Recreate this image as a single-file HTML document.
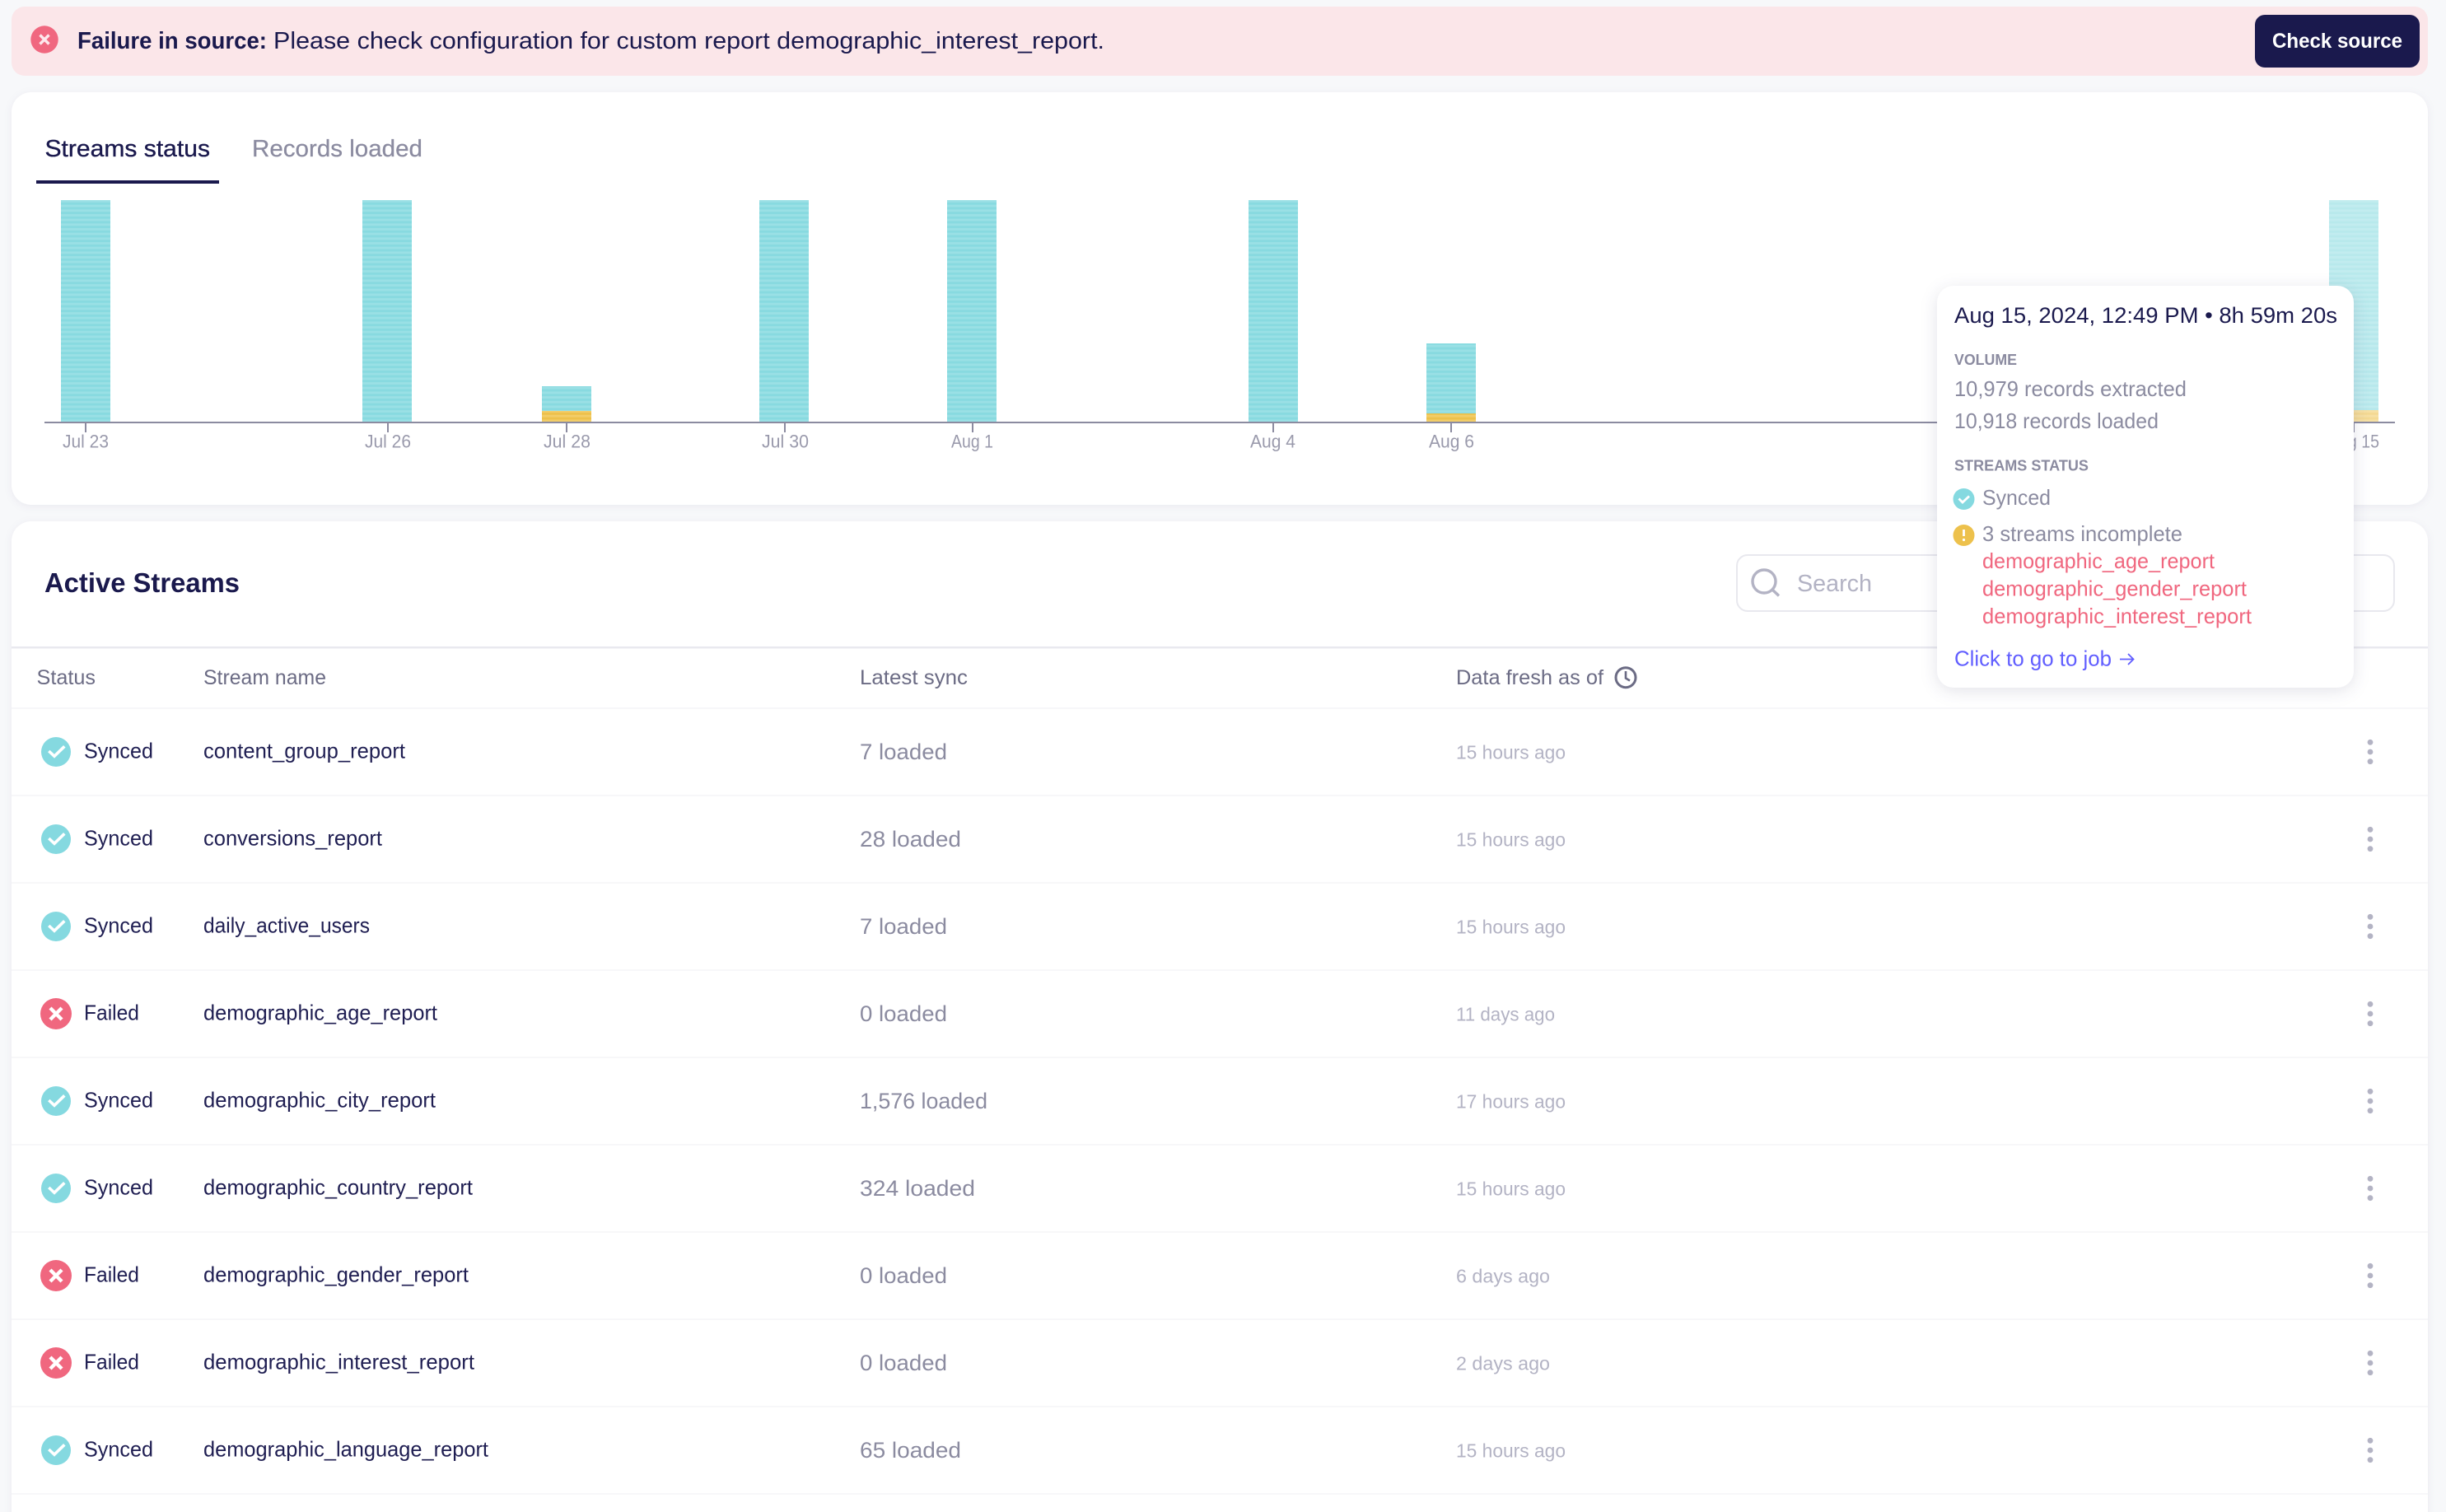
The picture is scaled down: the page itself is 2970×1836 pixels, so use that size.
<!DOCTYPE html>
<html lang="en">
<head>
<meta charset="utf-8">
<title>Streams status</title>
<style>
html,body{margin:0;padding:0;background:#f7f8fa;width:2970px;height:1836px;overflow:hidden}
svg{display:block}
text{font-family:"Liberation Sans",sans-serif;white-space:pre}
.navy{fill:#1a194d}
.n{fill:#1f1e52;font-size:26px}
.h{fill:#6b6b84;font-size:25px}
.l{fill:#8b8ba0;font-size:27px}
.a{fill:#b3b3c4;font-size:23.5px}
.x{fill:#9a9aac;font-size:22px}
.tg{fill:#8b8ba0;font-size:26px}
.ts{fill:#8b8ba0;font-size:18px;font-weight:bold}
.tr{fill:#f0677f;font-size:26px}
.card{fill:#fff;filter:drop-shadow(0 2px 5px rgba(26,25,77,.06))}
.line{stroke:#f7f7f9;stroke-width:2}
</style>
</head>
<body>
<svg width="2970" height="1836" viewBox="0 0 2970 1836" xmlns="http://www.w3.org/2000/svg">
<defs>
<pattern id="teal" patternUnits="userSpaceOnUse" width="60" height="5.67" y="243">
<rect width="60" height="5.67" fill="#88dae0"/><rect width="60" height="2.8" fill="#9ae0e5"/>
</pattern>
<pattern id="yel" patternUnits="userSpaceOnUse" width="60" height="5.67" y="243">
<rect width="60" height="5.67" fill="#edc14c"/><rect width="60" height="2.8" fill="#f2cd69"/>
</pattern>
<g id="ok"><circle r="18" fill="#85d9e0"/><path d="M-8.7-1L-2 5.3 10.3-6.7" fill="none" stroke="#fff" stroke-width="3.6"/></g>
<g id="bad"><circle r="19" fill="#f0677f"/><path d="M-7-7L7 7M7-7L-7 7" fill="none" stroke="#fff" stroke-width="4.4"/></g>
<g id="dots" fill="#b3b3c4"><circle cy="-11.7" r="3.4"/><circle r="3.4"/><circle cy="11.7" r="3.4"/></g>
</defs>

<rect width="2970" height="1836" fill="#f7f8fa"/>

<!-- Banner -->
<rect x="14" y="8" width="2934" height="84" rx="16" fill="#fbe6e9"/>
<circle cx="54" cy="48" r="16.7" fill="#f0677f"/>
<path d="M48.5 42.5l11 11m0-11l-11 11" stroke="#fde8ec" stroke-width="3.4" fill="none"/>
<text x="94" y="59" class="navy" font-size="29" font-weight="bold" textLength="230" lengthAdjust="spacingAndGlyphs">Failure in source:</text>
<text x="332" y="59" class="navy" font-size="29" textLength="1009" lengthAdjust="spacingAndGlyphs">Please check configuration for custom report demographic_interest_report.</text>
<rect x="2738" y="18" width="200" height="64" rx="12" fill="#1a194d"/>
<text x="2759" y="58" fill="#fff" font-size="25" font-weight="bold" textLength="158" lengthAdjust="spacingAndGlyphs">Check source</text>

<!-- Chart card -->
<rect class="card" x="14" y="112" width="2934" height="501" rx="24"/>
<text x="54.5" y="190" class="navy" font-size="29" stroke="#1a194d" stroke-width=".35" textLength="200.5" lengthAdjust="spacingAndGlyphs">Streams status</text>
<text x="306" y="190" fill="#8b8ba0" font-size="29" stroke="#8b8ba0" stroke-width=".25" textLength="207" lengthAdjust="spacingAndGlyphs">Records loaded</text>
<rect x="44" y="219" width="222" height="4" fill="#1a194d"/>

<g>
<rect x="74" y="243" width="60" height="269" fill="url(#teal)"/>
<rect x="440" y="243" width="60" height="269" fill="url(#teal)"/>
<rect x="658" y="469" width="60" height="30" fill="url(#teal)"/>
<rect x="658" y="499" width="60" height="13" fill="url(#yel)"/>
<rect x="922" y="243" width="60" height="269" fill="url(#teal)"/>
<rect x="1150" y="243" width="60" height="269" fill="url(#teal)"/>
<rect x="1516" y="243" width="60" height="269" fill="url(#teal)"/>
<rect x="1732" y="417" width="60" height="85" fill="url(#teal)"/>
<rect x="1732" y="502" width="60" height="10" fill="url(#yel)"/>
<g opacity=".6">
<rect x="2828" y="243" width="60" height="255" fill="url(#teal)"/>
<rect x="2828" y="498" width="60" height="14" fill="url(#yel)"/>
</g>
</g>
<rect x="54" y="512" width="2854" height="2" fill="#8b8ba0"/>
<g fill="#8b8ba0">
<rect x="103" y="514" width="2" height="11"/><rect x="470" y="514" width="2" height="11"/><rect x="687" y="514" width="2" height="11"/><rect x="952" y="514" width="2" height="11"/><rect x="1180" y="514" width="2" height="11"/><rect x="1545" y="514" width="2" height="11"/><rect x="1761" y="514" width="2" height="11"/><rect x="2857" y="514" width="2" height="11"/>
</g>
<text x="76" y="543.5" class="x" textLength="56" lengthAdjust="spacingAndGlyphs">Jul 23</text>
<text x="443" y="543.5" class="x" textLength="56" lengthAdjust="spacingAndGlyphs">Jul 26</text>
<text x="660" y="543.5" class="x" textLength="57" lengthAdjust="spacingAndGlyphs">Jul 28</text>
<text x="925" y="543.5" class="x" textLength="57" lengthAdjust="spacingAndGlyphs">Jul 30</text>
<text x="1155" y="543.5" class="x" textLength="51" lengthAdjust="spacingAndGlyphs">Aug 1</text>
<text x="1518" y="543.5" class="x" textLength="55" lengthAdjust="spacingAndGlyphs">Aug 4</text>
<text x="1735" y="543.5" class="x" textLength="55" lengthAdjust="spacingAndGlyphs">Aug 6</text>
<text x="2827" y="543.5" class="x" textLength="62" lengthAdjust="spacingAndGlyphs">Aug 15</text>

<!-- Table card -->
<rect class="card" x="14" y="633" width="2934" height="1240" rx="24"/>
<text x="54" y="719" class="navy" font-size="33" font-weight="bold" textLength="237" lengthAdjust="spacingAndGlyphs">Active Streams</text>

<rect x="2109" y="674" width="798" height="68" rx="13" fill="#fff" stroke="#e8e8ee" stroke-width="2"/>
<circle cx="2142" cy="706" r="14" fill="none" stroke="#b3b3c4" stroke-width="3.4"/>
<path d="M2152 716l8 7.5" stroke="#b3b3c4" stroke-width="3.4" fill="none"/>
<text x="2182" y="718" fill="#b3b3c4" font-size="29" textLength="91" lengthAdjust="spacingAndGlyphs">Search</text>

<rect x="14" y="785" width="2934" height="2.5" fill="#e9e9ef"/>

<text x="44.5" y="831" class="h" textLength="71.5" lengthAdjust="spacingAndGlyphs">Status</text>
<text x="247" y="831" class="h" textLength="149" lengthAdjust="spacingAndGlyphs">Stream name</text>
<text x="1044" y="831" class="h" textLength="131" lengthAdjust="spacingAndGlyphs">Latest sync</text>
<text x="1768" y="831" class="h" textLength="179" lengthAdjust="spacingAndGlyphs">Data fresh as of</text>
<circle cx="1974" cy="822.7" r="12" fill="none" stroke="#6b6b84" stroke-width="3"/>
<path d="M1974 815v8.5l5 3" fill="none" stroke="#6b6b84" stroke-width="2.6"/>

<g class="line">
<path d="M14 860H2948M14 966H2948M14 1072H2948M14 1178H2948M14 1284H2948M14 1390H2948M14 1496H2948M14 1602H2948M14 1708H2948M14 1814H2948"/>
</g>

<!-- Row 1 -->
<use href="#ok" x="68" y="913"/>
<text x="102" y="920.5" class="n" textLength="84" lengthAdjust="spacingAndGlyphs">Synced</text>
<text x="247" y="920.5" class="n" textLength="245" lengthAdjust="spacingAndGlyphs">content_group_report</text>
<text x="1044" y="922" class="l" textLength="106" lengthAdjust="spacingAndGlyphs">7 loaded</text>
<text x="1768" y="921.5" class="a" textLength="133" lengthAdjust="spacingAndGlyphs">15 hours ago</text>
<use href="#dots" x="2878" y="913"/>
<!-- Row 2 -->
<use href="#ok" x="68" y="1019"/>
<text x="102" y="1026.5" class="n" textLength="84" lengthAdjust="spacingAndGlyphs">Synced</text>
<text x="247" y="1026.5" class="n" textLength="217" lengthAdjust="spacingAndGlyphs">conversions_report</text>
<text x="1044" y="1028" class="l" textLength="123" lengthAdjust="spacingAndGlyphs">28 loaded</text>
<text x="1768" y="1027.5" class="a" textLength="133" lengthAdjust="spacingAndGlyphs">15 hours ago</text>
<use href="#dots" x="2878" y="1019"/>
<!-- Row 3 -->
<use href="#ok" x="68" y="1125"/>
<text x="102" y="1132.5" class="n" textLength="84" lengthAdjust="spacingAndGlyphs">Synced</text>
<text x="247" y="1132.5" class="n" textLength="202" lengthAdjust="spacingAndGlyphs">daily_active_users</text>
<text x="1044" y="1134" class="l" textLength="106" lengthAdjust="spacingAndGlyphs">7 loaded</text>
<text x="1768" y="1133.5" class="a" textLength="133" lengthAdjust="spacingAndGlyphs">15 hours ago</text>
<use href="#dots" x="2878" y="1125"/>
<!-- Row 4 -->
<use href="#bad" x="68" y="1231"/>
<text x="102" y="1238.5" class="n" textLength="67" lengthAdjust="spacingAndGlyphs">Failed</text>
<text x="247" y="1238.5" class="n" textLength="284" lengthAdjust="spacingAndGlyphs">demographic_age_report</text>
<text x="1044" y="1240" class="l" textLength="106" lengthAdjust="spacingAndGlyphs">0 loaded</text>
<text x="1768" y="1239.5" class="a" textLength="120" lengthAdjust="spacingAndGlyphs">11 days ago</text>
<use href="#dots" x="2878" y="1231"/>
<!-- Row 5 -->
<use href="#ok" x="68" y="1337"/>
<text x="102" y="1344.5" class="n" textLength="84" lengthAdjust="spacingAndGlyphs">Synced</text>
<text x="247" y="1344.5" class="n" textLength="282" lengthAdjust="spacingAndGlyphs">demographic_city_report</text>
<text x="1044" y="1346" class="l" textLength="155" lengthAdjust="spacingAndGlyphs">1,576 loaded</text>
<text x="1768" y="1345.5" class="a" textLength="133" lengthAdjust="spacingAndGlyphs">17 hours ago</text>
<use href="#dots" x="2878" y="1337"/>
<!-- Row 6 -->
<use href="#ok" x="68" y="1443"/>
<text x="102" y="1450.5" class="n" textLength="84" lengthAdjust="spacingAndGlyphs">Synced</text>
<text x="247" y="1450.5" class="n" textLength="327" lengthAdjust="spacingAndGlyphs">demographic_country_report</text>
<text x="1044" y="1452" class="l" textLength="140" lengthAdjust="spacingAndGlyphs">324 loaded</text>
<text x="1768" y="1451.5" class="a" textLength="133" lengthAdjust="spacingAndGlyphs">15 hours ago</text>
<use href="#dots" x="2878" y="1443"/>
<!-- Row 7 -->
<use href="#bad" x="68" y="1549"/>
<text x="102" y="1556.5" class="n" textLength="67" lengthAdjust="spacingAndGlyphs">Failed</text>
<text x="247" y="1556.5" class="n" textLength="322" lengthAdjust="spacingAndGlyphs">demographic_gender_report</text>
<text x="1044" y="1558" class="l" textLength="106" lengthAdjust="spacingAndGlyphs">0 loaded</text>
<text x="1768" y="1557.5" class="a" textLength="114" lengthAdjust="spacingAndGlyphs">6 days ago</text>
<use href="#dots" x="2878" y="1549"/>
<!-- Row 8 -->
<use href="#bad" x="68" y="1655"/>
<text x="102" y="1662.5" class="n" textLength="67" lengthAdjust="spacingAndGlyphs">Failed</text>
<text x="247" y="1662.5" class="n" textLength="329" lengthAdjust="spacingAndGlyphs">demographic_interest_report</text>
<text x="1044" y="1664" class="l" textLength="106" lengthAdjust="spacingAndGlyphs">0 loaded</text>
<text x="1768" y="1663.5" class="a" textLength="114" lengthAdjust="spacingAndGlyphs">2 days ago</text>
<use href="#dots" x="2878" y="1655"/>
<!-- Row 9 -->
<use href="#ok" x="68" y="1761"/>
<text x="102" y="1768.5" class="n" textLength="84" lengthAdjust="spacingAndGlyphs">Synced</text>
<text x="247" y="1768.5" class="n" textLength="346" lengthAdjust="spacingAndGlyphs">demographic_language_report</text>
<text x="1044" y="1770" class="l" textLength="123" lengthAdjust="spacingAndGlyphs">65 loaded</text>
<text x="1768" y="1769.5" class="a" textLength="133" lengthAdjust="spacingAndGlyphs">15 hours ago</text>
<use href="#dots" x="2878" y="1761"/>

<!-- Tooltip -->
<rect x="2352" y="347" width="506" height="488" rx="20" fill="#fff" style="filter:drop-shadow(0 4px 10px rgba(26,25,77,.12))"/>
<text x="2373" y="392" class="navy" font-size="27" textLength="465" lengthAdjust="spacingAndGlyphs">Aug 15, 2024, 12:49 PM • 8h 59m 20s</text>
<text x="2373" y="443" class="ts" textLength="76" lengthAdjust="spacingAndGlyphs">VOLUME</text>
<text x="2373" y="481" class="tg" textLength="282" lengthAdjust="spacingAndGlyphs">10,979 records extracted</text>
<text x="2373" y="520" class="tg" textLength="248" lengthAdjust="spacingAndGlyphs">10,918 records loaded</text>
<text x="2373" y="571.5" class="ts" textLength="163" lengthAdjust="spacingAndGlyphs">STREAMS STATUS</text>
<circle cx="2384.5" cy="606" r="13" fill="#85d9e0"/>
<path d="M2378.5 605.5l4.5 4.5 8-7.5" fill="none" stroke="#fff" stroke-width="2.8"/>
<text x="2407" y="613" class="tg" textLength="83" lengthAdjust="spacingAndGlyphs">Synced</text>
<circle cx="2384.5" cy="650" r="13" fill="#edc14c"/>
<path d="M2384.5 643v8" stroke="#fff" stroke-width="2.8" fill="none"/>
<circle cx="2384.5" cy="655.5" r="1.6" fill="#fff"/>
<text x="2407" y="657" class="tg" textLength="243" lengthAdjust="spacingAndGlyphs">3 streams incomplete</text>
<text x="2407" y="690" class="tr" textLength="282" lengthAdjust="spacingAndGlyphs">demographic_age_report</text>
<text x="2407" y="723.5" class="tr" textLength="321" lengthAdjust="spacingAndGlyphs">demographic_gender_report</text>
<text x="2407" y="757" class="tr" textLength="327" lengthAdjust="spacingAndGlyphs">demographic_interest_report</text>
<text x="2373" y="808.5" fill="#615eff" font-size="26" textLength="191" lengthAdjust="spacingAndGlyphs">Click to go to job</text>
<path d="M2574 800.5h16M2584 794l6.5 6.5-6.5 6.5" fill="none" stroke="#615eff" stroke-width="1.8"/>
</svg>
</body>
</html>
